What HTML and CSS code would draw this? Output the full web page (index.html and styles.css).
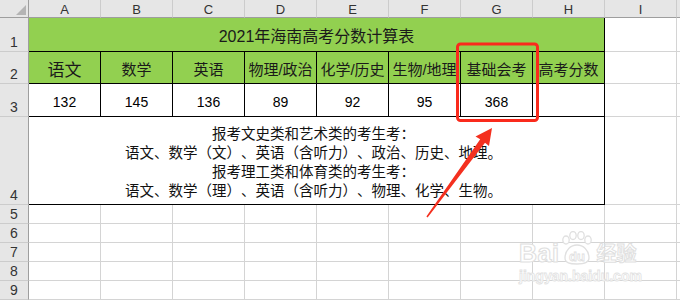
FILE: index.html
```html
<!DOCTYPE html>
<html lang="zh-CN">
<head>
<meta charset="utf-8">
<title>2021年海南高考分数计算表</title>
<link rel="stylesheet" href="styles.css">
</head>
<body>
<div class="sheet">
  <div class="grid">
    <!-- column header row -->
    <div class="corner"><span class="tri"></span></div>
    <div class="ch">A</div><div class="ch">B</div><div class="ch">C</div><div class="ch">D</div><div class="ch">E</div><div class="ch">F</div><div class="ch">G</div><div class="ch">H</div><div class="ch">I</div><div class="ch"></div>

    <!-- row 1 -->
    <div class="rh">1</div>
    <div class="cell t g title span8">2021年海南高考分数计算表</div>
    <div class="cell"></div><div class="cell"></div>

    <!-- row 2 -->
    <div class="rh">2</div>
    <div class="cell t g hd big">语文</div>
    <div class="cell t g hd">数学</div>
    <div class="cell t g hd">英语</div>
    <div class="cell t g hd">物理/政治</div>
    <div class="cell t g hd">化学/历史</div>
    <div class="cell t g hd">生物/地理</div>
    <div class="cell t g hd">基础会考</div>
    <div class="cell t g hd">高考分数</div>
    <div class="cell"></div><div class="cell"></div>

    <!-- row 3 -->
    <div class="rh">3</div>
    <div class="cell t num">132</div>
    <div class="cell t num">145</div>
    <div class="cell t num">136</div>
    <div class="cell t num">89</div>
    <div class="cell t num">92</div>
    <div class="cell t num">95</div>
    <div class="cell t num">368</div>
    <div class="cell t num"></div>
    <div class="cell"></div><div class="cell"></div>

    <!-- row 4 -->
    <div class="rh">4</div>
    <div class="cell t note span8">
      <span>报考文史类和艺术类的考生考：</span>
      <span>语文、数学（文）、英语（含听力）、政治、历史、地理。</span>
      <span>报考理工类和体育类的考生考：</span>
      <span>语文、数学（理）、英语（含听力）、物理、化学、生物。</span>
    </div>
    <div class="cell"></div><div class="cell"></div>

    <!-- rows 5-9 -->
    <div class="rh">5</div>
    <div class="cell"></div><div class="cell"></div><div class="cell"></div><div class="cell"></div><div class="cell"></div><div class="cell"></div><div class="cell"></div><div class="cell"></div><div class="cell"></div><div class="cell"></div>
    <div class="rh">6</div>
    <div class="cell"></div><div class="cell"></div><div class="cell"></div><div class="cell"></div><div class="cell"></div><div class="cell"></div><div class="cell"></div><div class="cell"></div><div class="cell"></div><div class="cell"></div>
    <div class="rh">7</div>
    <div class="cell"></div><div class="cell"></div><div class="cell"></div><div class="cell"></div><div class="cell"></div><div class="cell"></div><div class="cell"></div><div class="cell"></div><div class="cell"></div><div class="cell"></div>
    <div class="rh">8</div>
    <div class="cell"></div><div class="cell"></div><div class="cell"></div><div class="cell"></div><div class="cell"></div><div class="cell"></div><div class="cell"></div><div class="cell"></div><div class="cell"></div><div class="cell"></div>
    <div class="rh">9</div>
    <div class="cell"></div><div class="cell"></div><div class="cell"></div><div class="cell"></div><div class="cell"></div><div class="cell"></div><div class="cell"></div><div class="cell"></div><div class="cell"></div><div class="cell"></div>
  </div>

  <!-- annotation overlay: red box + arrow -->
  <svg class="annot" width="680" height="300" viewBox="0 0 680 300" aria-hidden="true">
    <rect x="457.5" y="44" width="80" height="76.5" rx="3" ry="3" fill="none" stroke="#fa2a1c" stroke-width="3"/>
    <polygon fill="#f4301f" points="492,128 489,146 485,142.8 427.6,217.4 426.4,216.6 480.2,139.2 475.5,136.5"/>
  </svg>

  <!-- watermark -->
  <div class="wm">
    <div class="wm-top">
      <span class="wm-bai">Bai</span>
      <svg class="wm-paw" width="34" height="34" viewBox="0 0 34 34">
        <g fill="#fff" stroke="#e0e0e0" stroke-width="1.3">
          <ellipse cx="6" cy="9" rx="3.2" ry="4"/>
          <ellipse cx="13" cy="4.5" rx="3.2" ry="4"/>
          <ellipse cx="21" cy="4.5" rx="3.2" ry="4"/>
          <ellipse cx="28" cy="9" rx="3.2" ry="4"/>
          <path d="M5 27 C5 19 11 14 17 14 C23 14 29 19 29 27 C29 32 24 33 17 33 C10 33 5 32 5 27 Z"/>
        </g>
        <text x="17" y="30" text-anchor="middle" class="wm-du">du</text>
      </svg>
      <span class="wm-jy">经验</span>
    </div>
    <div class="wm-url">jingyan.baidu.com</div>
  </div>
</div>
</body>
</html>
```

FILE: styles.css
```css
html, body {
  margin: 0;
  padding: 0;
  background: #ffffff;
}

body {
  width: 680px;
  height: 300px;
  overflow: hidden;
  font-family: "Liberation Sans", "Noto Sans CJK SC", sans-serif;
  text-spacing-trim: space-all;
}

.sheet {
  position: relative;
  width: 680px;
  height: 300px;
  overflow: hidden;
}

.grid {
  display: grid;
  grid-template-columns: 29px repeat(10, 72px);
  grid-template-rows: 18px 34px 32px 33px 88px repeat(5, 19px);
  width: 749px;
}

.grid > div {
  box-sizing: border-box;
  display: flex;
  align-items: center;
  justify-content: center;
  white-space: nowrap;
  overflow: hidden;
}

/* headers */
.corner {
  background: #e6e6e6;
  border-right: 1px solid #9e9e9e;
  border-bottom: 1px solid #9e9e9e;
  justify-content: flex-end !important;
  align-items: flex-end !important;
  padding: 0 2px 2px 0;
}

.tri {
  width: 0;
  height: 0;
  border-left: 10px solid transparent;
  border-bottom: 10px solid #b4b4b4;
}

.ch {
  background: #e6e6e6;
  border-right: 1px solid #cccccc;
  border-bottom: 1px solid #9e9e9e;
  font-size: 13px;
  color: #333333;
  padding-top: 1px;
}

.rh {
  background: #e6e6e6;
  border-right: 1px solid #9e9e9e;
  border-bottom: 1px solid #cccccc;
  font-size: 14px;
  color: #333333;
  align-items: flex-end !important;
  line-height: 16px;
  padding-bottom: 1px;
}

/* cells */
.cell {
  border-right: 1px solid #d4d4d4;
  border-bottom: 1px solid #d4d4d4;
  font-size: 14px;
  color: #111111;
}

.cell.t {
  border-right-color: #000000;
  border-bottom-color: #000000;
}

.g {
  background: #92d050;
}

.span8 {
  grid-column: span 8;
}

.title {
  font-size: 16px;
  color: #1a1a1a;
  padding-top: 1px;
}

.hd {
  font-size: 15px;
  color: #1a1a1a;
  padding-top: 2px;
}

.hd.big {
  font-size: 17px;
}

.num {
  font-size: 14px;
  color: #000000;
  padding-top: 3px;
}

.note {
  flex-direction: column;
  justify-content: flex-end !important;
  align-items: center;
  font-size: 14.5px;
  line-height: 19px;
  color: #111111;
  padding: 0 6px 3px 0;
}

.note span {
  display: block;
}

/* annotation */
.annot {
  position: absolute;
  left: 0;
  top: 0;
  pointer-events: none;
}

/* watermark */
.wm {
  position: absolute;
  left: 519px;
  top: 227px;
  pointer-events: none;
}

.wm-top {
  display: flex;
  align-items: flex-end;
  height: 38px;
}

.wm-bai {
  font-family: "Liberation Sans", sans-serif;
  font-weight: bold;
  font-size: 25px;
  line-height: 24px;
  color: #ffffff;
  -webkit-text-stroke: 1.1px #e0e0e0;
  letter-spacing: 0.5px;
}

.wm-paw {
  display: block;
  margin: 0 2px 0 1px;
}

.wm-du {
  font-family: "Liberation Sans", sans-serif;
  font-weight: bold;
  font-size: 13px;
  fill: #ffffff;
  stroke: #e0e0e0;
  stroke-width: 0.8px;
}

.wm-jy {
  font-family: "Noto Sans CJK SC", sans-serif;
  font-weight: bold;
  font-size: 20px;
  line-height: 24px;
  color: #ffffff;
  -webkit-text-stroke: 1px #e0e0e0;
}

.wm-url {
  font-family: "Liberation Sans", sans-serif;
  font-weight: bold;
  font-size: 14px;
  line-height: 18px;
  color: #ffffff;
  -webkit-text-stroke: 0.8px #e2e2e2;
  margin-top: 2px;
}
```
